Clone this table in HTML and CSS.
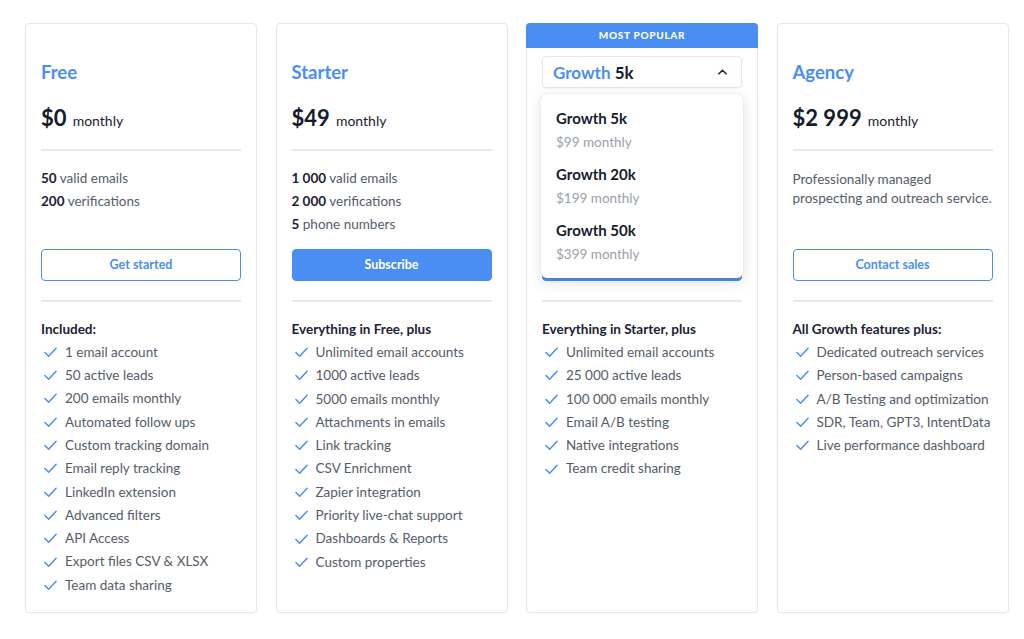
FILE: index.html
```html
<!DOCTYPE html>
<html>
<head>
<meta charset="utf-8">
<link rel="stylesheet" href="styles.css">
</head>
<body>
<div class="plans">
  <div class="card">
    <div class="band"></div>
    <div class="head"><h2 class="title">Free</h2></div>
    <div class="price"><span class="amount">$0</span> <span class="per">monthly</span></div>
    <hr class="divider">
    <div class="stats">
      <p><b>50</b> valid emails</p>
      <p><b>200</b> verifications</p>
    </div>
    <a class="btn btn-outline">Get started</a>
    <hr class="divider divider-low">
    <h3 class="feat-title">Included:</h3>
    <ul class="features">
      <li><svg class="check" viewBox="0 0 14 11"><path d="M1 5.5 L5 9.5 L13 1"/></svg>1 email account</li>
      <li><svg class="check" viewBox="0 0 14 11"><path d="M1 5.5 L5 9.5 L13 1"/></svg>50 active leads</li>
      <li><svg class="check" viewBox="0 0 14 11"><path d="M1 5.5 L5 9.5 L13 1"/></svg>200 emails monthly</li>
      <li><svg class="check" viewBox="0 0 14 11"><path d="M1 5.5 L5 9.5 L13 1"/></svg>Automated follow ups</li>
      <li><svg class="check" viewBox="0 0 14 11"><path d="M1 5.5 L5 9.5 L13 1"/></svg>Custom tracking domain</li>
      <li><svg class="check" viewBox="0 0 14 11"><path d="M1 5.5 L5 9.5 L13 1"/></svg>Email reply tracking</li>
      <li><svg class="check" viewBox="0 0 14 11"><path d="M1 5.5 L5 9.5 L13 1"/></svg>LinkedIn extension</li>
      <li><svg class="check" viewBox="0 0 14 11"><path d="M1 5.5 L5 9.5 L13 1"/></svg>Advanced filters</li>
      <li><svg class="check" viewBox="0 0 14 11"><path d="M1 5.5 L5 9.5 L13 1"/></svg>API Access</li>
      <li><svg class="check" viewBox="0 0 14 11"><path d="M1 5.5 L5 9.5 L13 1"/></svg>Export files CSV &amp; XLSX</li>
      <li><svg class="check" viewBox="0 0 14 11"><path d="M1 5.5 L5 9.5 L13 1"/></svg>Team data sharing</li>
    </ul>
  </div>

  <div class="card">
    <div class="band"></div>
    <div class="head"><h2 class="title">Starter</h2></div>
    <div class="price"><span class="amount">$49</span> <span class="per">monthly</span></div>
    <hr class="divider">
    <div class="stats">
      <p><b>1 000</b> valid emails</p>
      <p><b>2 000</b> verifications</p>
      <p><b>5</b> phone numbers</p>
    </div>
    <a class="btn btn-solid">Subscribe</a>
    <hr class="divider divider-low">
    <h3 class="feat-title">Everything in Free, plus</h3>
    <ul class="features">
      <li><svg class="check" viewBox="0 0 14 11"><path d="M1 5.5 L5 9.5 L13 1"/></svg>Unlimited email accounts</li>
      <li><svg class="check" viewBox="0 0 14 11"><path d="M1 5.5 L5 9.5 L13 1"/></svg>1000 active leads</li>
      <li><svg class="check" viewBox="0 0 14 11"><path d="M1 5.5 L5 9.5 L13 1"/></svg>5000 emails monthly</li>
      <li><svg class="check" viewBox="0 0 14 11"><path d="M1 5.5 L5 9.5 L13 1"/></svg>Attachments in emails</li>
      <li><svg class="check" viewBox="0 0 14 11"><path d="M1 5.5 L5 9.5 L13 1"/></svg>Link tracking</li>
      <li><svg class="check" viewBox="0 0 14 11"><path d="M1 5.5 L5 9.5 L13 1"/></svg>CSV Enrichment</li>
      <li><svg class="check" viewBox="0 0 14 11"><path d="M1 5.5 L5 9.5 L13 1"/></svg>Zapier integration</li>
      <li><svg class="check" viewBox="0 0 14 11"><path d="M1 5.5 L5 9.5 L13 1"/></svg>Priority live-chat support</li>
      <li><svg class="check" viewBox="0 0 14 11"><path d="M1 5.5 L5 9.5 L13 1"/></svg>Dashboards &amp; Reports</li>
      <li><svg class="check" viewBox="0 0 14 11"><path d="M1 5.5 L5 9.5 L13 1"/></svg>Custom properties</li>
    </ul>
  </div>

  <div class="card card-popular">
    <div class="band band-popular">MOST POPULAR</div>
    <div class="head">
      <div class="select">
        <span class="select-label"><span class="sel-name">Growth</span> 5k</span>
        <svg class="chevron" viewBox="0 0 10 6"><path d="M1 5 L5 1 L9 5"/></svg>
      </div>
    </div>
    <div class="price covered"><span class="amount">$99</span> <span class="per">monthly</span></div>
    <hr class="divider">
    <div class="stats covered">
      <p><b>5 000</b> valid emails</p>
      <p><b>10 000</b> verifications</p>
      <p><b>10</b> phone numbers</p>
    </div>
    <a class="btn btn-solid covered-text">Subscribe</a>
    <hr class="divider divider-low">
    <h3 class="feat-title">Everything in Starter, plus</h3>
    <ul class="features">
      <li><svg class="check" viewBox="0 0 14 11"><path d="M1 5.5 L5 9.5 L13 1"/></svg>Unlimited email accounts</li>
      <li><svg class="check" viewBox="0 0 14 11"><path d="M1 5.5 L5 9.5 L13 1"/></svg>25 000 active leads</li>
      <li><svg class="check" viewBox="0 0 14 11"><path d="M1 5.5 L5 9.5 L13 1"/></svg>100 000 emails monthly</li>
      <li><svg class="check" viewBox="0 0 14 11"><path d="M1 5.5 L5 9.5 L13 1"/></svg>Email A/B testing</li>
      <li><svg class="check" viewBox="0 0 14 11"><path d="M1 5.5 L5 9.5 L13 1"/></svg>Native integrations</li>
      <li><svg class="check" viewBox="0 0 14 11"><path d="M1 5.5 L5 9.5 L13 1"/></svg>Team credit sharing</li>
    </ul>
    <div class="dropdown">
      <div class="opt"><div class="opt-name">Growth 5k</div><div class="opt-price">$99 monthly</div></div>
      <div class="opt"><div class="opt-name">Growth 20k</div><div class="opt-price">$199 monthly</div></div>
      <div class="opt"><div class="opt-name">Growth 50k</div><div class="opt-price">$399 monthly</div></div>
    </div>
  </div>

  <div class="card">
    <div class="band"></div>
    <div class="head"><h2 class="title">Agency</h2></div>
    <div class="price"><span class="amount">$2 999</span> <span class="per">monthly</span></div>
    <hr class="divider">
    <div class="stats">
      <p class="desc">Professionally managed prospecting and outreach service.</p>
    </div>
    <a class="btn btn-outline">Contact sales</a>
    <hr class="divider divider-low">
    <h3 class="feat-title">All Growth features plus:</h3>
    <ul class="features">
      <li><svg class="check" viewBox="0 0 14 11"><path d="M1 5.5 L5 9.5 L13 1"/></svg>Dedicated outreach services</li>
      <li><svg class="check" viewBox="0 0 14 11"><path d="M1 5.5 L5 9.5 L13 1"/></svg>Person-based campaigns</li>
      <li><svg class="check" viewBox="0 0 14 11"><path d="M1 5.5 L5 9.5 L13 1"/></svg>A/B Testing and optimization</li>
      <li><svg class="check" viewBox="0 0 14 11"><path d="M1 5.5 L5 9.5 L13 1"/></svg>SDR, Team, GPT3, IntentData</li>
      <li><svg class="check" viewBox="0 0 14 11"><path d="M1 5.5 L5 9.5 L13 1"/></svg>Live performance dashboard</li>
    </ul>
  </div>
</div>
</body>
</html>
```

FILE: styles.css
```css
* { box-sizing: border-box; }
html, body { margin: 0; padding: 0; background: #ffffff; }
body {
  font-family: Lato, "Open Sans", "Liberation Sans", sans-serif;
  color: #1b2233;
  width: 1024px;
  height: 639px;
  overflow: hidden;
}
.plans {
  display: flex;
  gap: 18.5px;
  padding: 23px 0 0 25px;
  align-items: stretch;
}
.card {
  position: relative;
  width: 232px;
  height: 590px;
  border: 1px solid #e4e6ea;
  border-radius: 4px;
  padding: 0 15px 15px;
  background: #fff;
  display: flex;
  flex-direction: column;
  box-shadow: 0 1px 2px rgba(0,0,0,0.03);
}
.band {
  height: 24px;
  margin: 0 -15px;
}
.band-popular {
  margin: -1px -16px 0;
  height: 25px;
  background: #4a8ef3;
  color: #fff;
  font-size: 10px;
  font-weight: 900;
  letter-spacing: 0.7px;
  text-align: center;
  line-height: 25px;
  border-radius: 4px 4px 0 0;
}
.head {
  margin-top: 8px;
  height: 32px;
  display: flex;
  align-items: center;
}
.title {
  margin: 0;
  font-size: 18.5px;
  font-weight: 700;
  color: #4a8ef3;
  line-height: 32px;
}
.price {
  margin-top: 12px;
  height: 36px;
  line-height: 36px;
  white-space: nowrap;
}
.covered { visibility: hidden; }
.covered-text { color: transparent; }
.amount {
  font-size: 22px;
  font-weight: 700;
  color: #151c2b;
}
.per {
  font-size: 14px;
  color: #1b2233;
  margin-left: 2px;
}
.divider {
  border: 0;
  height: 2px;
  background: #e6e8ec;
  margin: 13px 0 0;
}
.divider-low { margin-top: 19px; }
.stats {
  margin-top: 16px;
  min-height: 69px;
}
.stats p {
  margin: 0;
  font-size: 13.5px;
  line-height: 23px;
  color: #555c69;
}
.stats b { color: #1b2233; font-weight: 700; }
.stats .desc {
  line-height: 18.5px;
  padding-top: 3px;
}
.btn {
  display: block;
  margin-top: 13px;
  height: 32px;
  line-height: 30px;
  border-radius: 4px;
  text-align: center;
  font-size: 12.5px;
  font-weight: 700;
}
.btn-outline {
  border: 1px solid #4a8ef3;
  color: #4a8ef3;
  background: #fff;
}
.btn-solid {
  border: 1px solid #4a8ef3;
  background: #4a8ef3;
  color: #fff;
}
.btn-solid.covered-text { color: transparent; }
.feat-title {
  margin: 16px 0 0;
  font-size: 13.5px;
  font-weight: 700;
  line-height: 23px;
  color: #1b2233;
}
.features {
  list-style: none;
  margin: 0;
  padding: 0;
}
.features li {
  display: flex;
  align-items: center;
  font-size: 13.5px;
  line-height: 23.3px;
  color: #555c69;
  white-space: nowrap;
}
.check {
  width: 13px;
  height: 11px;
  margin: 0 8px 0 3px;
  flex: none;
}
.check path {
  fill: none;
  stroke: #4a8ef3;
  stroke-width: 1.6;
  stroke-linecap: round;
  stroke-linejoin: round;
}
.select {
  width: 100%;
  height: 32px;
  border: 1px solid #e4e6ea;
  border-radius: 4px;
  display: flex;
  align-items: center;
  justify-content: space-between;
  padding: 0 14px 0 10px;
  box-shadow: 0 1px 2px rgba(0,0,0,0.04);
}
.select-label {
  font-size: 17px;
  font-weight: 700;
  color: #151c2b;
}
.sel-name { color: #4a8ef3; }
.chevron { width: 9px; height: 6px; }
.chevron path {
  fill: none;
  stroke: #1f2a44;
  stroke-width: 1.8;
  stroke-linecap: round;
  stroke-linejoin: round;
}
.dropdown {
  position: absolute;
  left: 14px;
  top: 70px;
  width: 202px;
  height: 184px;
  background: #fff;
  border-radius: 6px;
  box-shadow: 0 4px 14px rgba(20,30,50,0.14), 0 0 1px rgba(20,30,50,0.2);
  padding: 13px 15px 0;
}
.opt { height: 56px; }
.opt-name {
  font-size: 15px;
  font-weight: 700;
  line-height: 22px;
  color: #151c2b;
}
.opt-price {
  font-size: 13.5px;
  line-height: 26px;
  color: #9aa0ab;
}
```
